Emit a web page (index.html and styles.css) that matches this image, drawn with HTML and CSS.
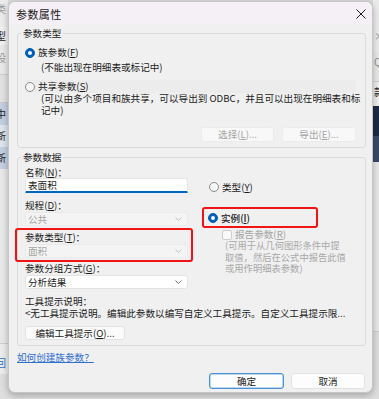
FILE: index.html
```html
<!DOCTYPE html>
<html lang="zh-CN">
<head>
<meta charset="utf-8">
<title>参数属性</title>
<link rel="stylesheet" href="styles.css">
</head>
<body>
<div class="screen">
  <div class="bg-left">
    <div class="bgl b1"><span class="frag grey">类</span></div>
    <div class="bgl b2"><span class="frag">型</span></div>
    <div class="bgl b3"><span class="frag grey">设</span></div>
    <div class="bgl b4"></div>
    <div class="bgl b5"><span class="frag">中</span></div>
    <div class="bgl b6"><span class="frag">新</span></div>
    <div class="bgl b7"><span class="frag">新</span></div>
    <div class="bgl b8"></div>
    <div class="bgl b9"><span class="frag blue">回</span></div>
    <div class="bgl b10"></div>
  </div>

  <div class="dialog">
    <div class="titlebar">
      <span class="title">参数属性</span>
      <svg class="close" width="10" height="10" viewBox="0 0 10 10"><path d="M0.5 0.5L9.5 9.5M9.5 0.5L0.5 9.5" stroke="#1c1c1c" stroke-width="1"/></svg>
    </div>

    <div class="content">
      <fieldset class="group g-type">
        <legend>参数类型</legend>
        <div class="radio-row"><span class="radio on"></span><span>族参数(<u>F</u>)</span></div>
        <div class="note n1">(不能出现在明细表或标记中)</div>
        <div class="radio-row r2"><span class="radio"></span><span>共享参数(<u>S</u>)</span></div>
        <div class="note n2">(可以由多个项目和族共享，可以导出到 ODBC，并且可以出现在明细表和标<br>记中)</div>
        <div class="btn-row">
          <button class="btn disabled w73">选择(<u>L</u>)...</button>
          <button class="btn disabled w74">导出(<u>E</u>)...</button>
        </div>
      </fieldset>

      <fieldset class="group g-data">
        <legend>参数数据</legend>
        <div class="cols">
          <div class="col-left">
            <div class="lbl">名称(<u>N</u>)：</div>
            <div class="input">表面积</div>
            <div class="lbl mt6">规程(<u>D</u>)：</div>
            <div class="combo disabled"><span>公共</span><svg width="7" height="4" viewBox="0 0 7 4"><path d="M0.5 0.5L3.5 3.5L6.5 0.5" fill="none" stroke="#b5b5b5" stroke-width="0.8"/></svg></div>
            <div class="redbox rb1">
              <div class="lbl">参数类型(<u>T</u>)：</div>
              <div class="combo disabled"><span>面积</span><svg width="7" height="4" viewBox="0 0 7 4"><path d="M0.5 0.5L3.5 3.5L6.5 0.5" fill="none" stroke="#b5b5b5" stroke-width="0.8"/></svg></div>
            </div>
            <div class="lbl">参数分组方式(<u>G</u>)：</div>
            <div class="combo"><span>分析结果</span><svg width="7" height="4" viewBox="0 0 7 4"><path d="M0.5 0.5L3.5 3.5L6.5 0.5" fill="none" stroke="#555" stroke-width="0.8"/></svg></div>
          </div>
          <div class="col-right">
            <div class="radio-row type-row"><span class="radio"></span><span>类型(<u>Y</u>)</span></div>
            <div class="redbox rb2">
              <div class="radio-row inst-row"><span class="radio on"></span><span class="strong">实例(<u>I</u>)</span></div>
            </div>
            <div class="check-row"><span class="check"></span><span>报告参数(<u>R</u>)</span></div>
            <div class="desc">(可用于从几何图形条件中提<br>取值，然后在公式中报告此值<br>或用作明细表参数)</div>
          </div>
        </div>
        <div class="lbl tip-label">工具提示说明：</div>
        <div class="tip-note">&lt;无工具提示说明。编辑此参数以编写自定义工具提示。自定义工具提示限...</div>
        <button class="btn edit-btn">编辑工具提示(<u>O</u>)...</button>
      </fieldset>

      <a class="help-link" href="#">如何创建族参数？</a>

      <div class="footer">
        <button class="btn primary">确定</button>
        <button class="btn cancel">取消</button>
      </div>
    </div>
  </div>

  <div class="bg-right">
    <div class="bgr r1"></div>
    <div class="bgr r2"><span class="rfrag grey">×</span></div>
    <div class="bgr r3"><span class="rfrag grey">Q</span></div>
    <div class="bgr r4"><span class="rfrag">款</span></div>
    <div class="bgr r5"></div>
    <div class="bgr r6"></div>
    <div class="bgr r7"></div>
    <div class="bgr r8"></div>
  </div>
</div>
</body>
</html>
```

FILE: styles.css
```css
* { box-sizing: border-box; }

html, body {
  margin: 0;
  padding: 0;
}

body {
  width: 379px;
  height: 399px;
  overflow: hidden;
  background: #dcdcdc;
  font-family: "Noto Sans CJK SC", "Noto Sans", sans-serif;
  font-size: 9.6px;
  color: #1b1b1b;
}

u { text-decoration: underline; text-underline-offset: 1px; }

.screen {
  display: flex;
  height: 399px;
}

/* background application strips */
.bg-left {
  width: 8px;
  flex: none;
  display: flex;
  flex-direction: column;
  overflow: hidden;
  background: #e6e6e6;
}
.bgl { flex: none; overflow: hidden; white-space: nowrap; }
.frag {
  display: block;
  margin-left: -4px;
  font-size: 10px;
  line-height: 12px;
  color: #222;
}
.frag.grey { color: #9a9a9a; }
.frag.blue { color: #2f6fd0; }
.b1 { height: 27px; background: #ececec; padding-top: 3px; }
.b2 { height: 18px; background: #f1f1f1; padding-top: 3px; }
.b3 { height: 30px; background: #e9e9e9; padding-top: 7px; border-bottom: 1px solid #cfcfcf; }
.b4 { height: 28px; background: #e2e2e2; border-bottom: 1px solid #c9c9c9; }
.b5 { height: 22px; background: #c3cfe2; padding-top: 5px; }
.b6 { height: 22px; background: #dfe3ea; padding-top: 5px; }
.b7 { height: 22px; background: #c3cfe2; padding-top: 5px; }
.b8 { height: 175px; background: #e9e9e9; border-bottom: 1px solid #cfcfcf; }
.b9 { height: 30px; background: #ececec; padding-top: 13px; }
.b10 { flex: 1; background: #dedede; }

.bg-right {
  width: 6px;
  flex: none;
  display: flex;
  flex-direction: column;
  overflow: hidden;
  background: #e6e6e6;
}
.bgr { flex: none; overflow: hidden; white-space: nowrap; }
.rfrag {
  display: block;
  margin-left: 1px;
  font-size: 10px;
  line-height: 12px;
  color: #222;
}
.rfrag.grey { color: #8d8d8d; }
.r1 { height: 30px; background: #ececec; }
.r2 { height: 22px; background: #ececec; }
.r3 { height: 30px; background: #e9e9e9; padding-top: 4px; border-bottom: 1px solid #cfcfcf; }
.r4 { height: 24px; background: #ededed; padding-top: 4px; }
.r5 { height: 30px; background: #1e2a42; }
.r6 { height: 26px; background: #3b4a66; }
.r7 { height: 170px; background: #e8e8e8; border-bottom: 1px solid #cdcdcd; }
.r8 { flex: 1; background: #dedede; }

/* dialog */
.dialog {
  width: 365px;
  height: 392px;
  margin-top: 1px;
  flex: none;
  display: flex;
  flex-direction: column;
  background: #f0f0f0;
  border: 1px solid #c6c6c6;
  border-radius: 7px;
  overflow: hidden;
  box-shadow: 0 2px 7px rgba(0, 0, 0, 0.28);
  position: relative;
  z-index: 1;
}

.titlebar {
  height: 23px;
  flex: none;
  display: flex;
  align-items: center;
  justify-content: space-between;
  padding: 0 6px 0 7px;
  background: #f5eff6;
}
.title {
  font-size: 11px;
  letter-spacing: 0.4px;
  line-height: 14px;
  color: #1a1a1a;
}
.close { display: block; }

.content {
  flex: 1;
  padding: 2px 6px 0 8px;
  display: flex;
  flex-direction: column;
}

/* group boxes */
.group {
  margin: 0;
  min-width: 0;
  border: 1px solid #dadada;
  border-radius: 3px;
  padding: 7px 9px 5px 7px;
}
.group legend {
  padding: 0 2px;
  margin-left: -4px;
  font-size: 9.6px;
  line-height: 12px;
}
.g-data {
  margin-top: 3px;
  padding-top: 3px;
}

.radio-row {
  display: flex;
  align-items: center;
  gap: 3px;
  height: 13px;
  line-height: 13px;
  white-space: nowrap;
}
.radio-row.r2 { margin-top: 7px; }

.radio {
  width: 10px;
  height: 10px;
  flex: none;
  border-radius: 50%;
  border: 1px solid #8b8b8b;
  background: #f6f6f6;
  position: relative;
}
.radio.on {
  background: #005fb8;
  border-color: #005fb8;
}
.radio.on::after {
  content: "";
  position: absolute;
  left: 2px;
  top: 2px;
  width: 4px;
  height: 4px;
  border-radius: 50%;
  background: #ffffff;
}

.note {
  margin-left: 16px;
  white-space: nowrap;
}
.note.n1 { margin-top: 2px; line-height: 12px; }
.note.n2 { line-height: 11.5px; }

.btn-row {
  margin-top: 11px;
  display: flex;
  justify-content: flex-end;
  gap: 8px;
}

.btn {
  font-family: inherit;
  font-size: 9.6px;
  color: #1b1b1b;
  background: #fbfbfb;
  border: 1px solid #e2e2e2;
  border-radius: 3px;
  padding: 0;
  margin: 0;
  height: 15px;
  line-height: 13px;
  white-space: nowrap;
}
.btn.disabled {
  color: #a3a3a3;
  border-color: #ececec;
  background: #f8f8f8;
}
.w73 { width: 73px; }
.w74 { width: 74px; }

/* parameter data */
.cols {
  display: grid;
  grid-template-columns: 163px 1fr;
  column-gap: 14px;
}
.col-left, .col-right {
  display: flex;
  flex-direction: column;
}

.lbl {
  line-height: 12px;
  height: 12px;
  white-space: nowrap;
}
.mt6 { margin-top: 6px; }

.input {
  height: 15px;
  line-height: 12px;
  padding-left: 2px;
  background: #ffffff;
  border: 1px solid #e6e6e6;
  border-bottom: 2px solid #0067c0;
  border-radius: 3px 3px 1px 1px;
}

.combo {
  height: 14px;
  margin-top: 1px;
  display: flex;
  align-items: center;
  justify-content: space-between;
  padding: 0 5px 0 2px;
  background: #ffffff;
  border: 1px solid #e4e4e4;
  border-radius: 3px;
  line-height: 12px;
}
.combo.disabled {
  background: #f4f4f4;
  border-color: #eaeaea;
  color: #a5a5a5;
}
.combo svg { display: block; }

.redbox {
  border: 2px solid #f01414;
  border-radius: 3px;
}
.rb1 {
  margin: 2px -5px 0 -10px;
  padding: 1px 3px 2px 8px;
}
.rb2 {
  width: 116px;
  margin-top: 14px;
  padding: 3px 4px 2px 4px;
}

.type-row {
  margin-top: 15px;
  padding-left: 7px;
  height: 12px;
}
.inst-row { height: 12px; }
.strong { font-weight: 500; }

.check-row {
  margin-top: 1px;
  height: 11px;
  display: flex;
  align-items: center;
  gap: 3px;
  padding-left: 20px;
  color: #a3a3a3;
  line-height: 11px;
  white-space: nowrap;
}
.check {
  width: 10px;
  height: 10px;
  flex: none;
  border: 1px solid #cdcdcd;
  border-radius: 2px;
  background: #f9f9f9;
}
.desc {
  margin-left: 23px;
  font-size: 9.3px;
  line-height: 11.5px;
  color: #a8a8a8;
  white-space: nowrap;
}

.tip-label { margin-top: 6px; }
.tip-note {
  line-height: 12px;
  white-space: nowrap;
  overflow: hidden;
}
.edit-btn {
  margin-top: 7px;
  width: 100px;
  height: 14px;
  line-height: 12px;
  display: block;
}

.help-link {
  margin-top: 5px;
  align-self: flex-start;
  line-height: 12px;
  color: #2f6fd0;
  text-decoration: underline;
  text-underline-offset: 1px;
}

.footer {
  margin-top: 10px;
  display: flex;
  justify-content: flex-end;
  gap: 7px;
  padding-right: 1px;
}
.footer .btn {
  width: 75px;
  height: 16px;
  line-height: 14px;
  background: #fdfdfd;
}
.footer .btn.primary {
  border: 1px solid #4a90d9;
  box-shadow: inset 0 0 0 0.5px #7fb2e8;
}
.footer .btn.cancel { width: 74px; }
```
